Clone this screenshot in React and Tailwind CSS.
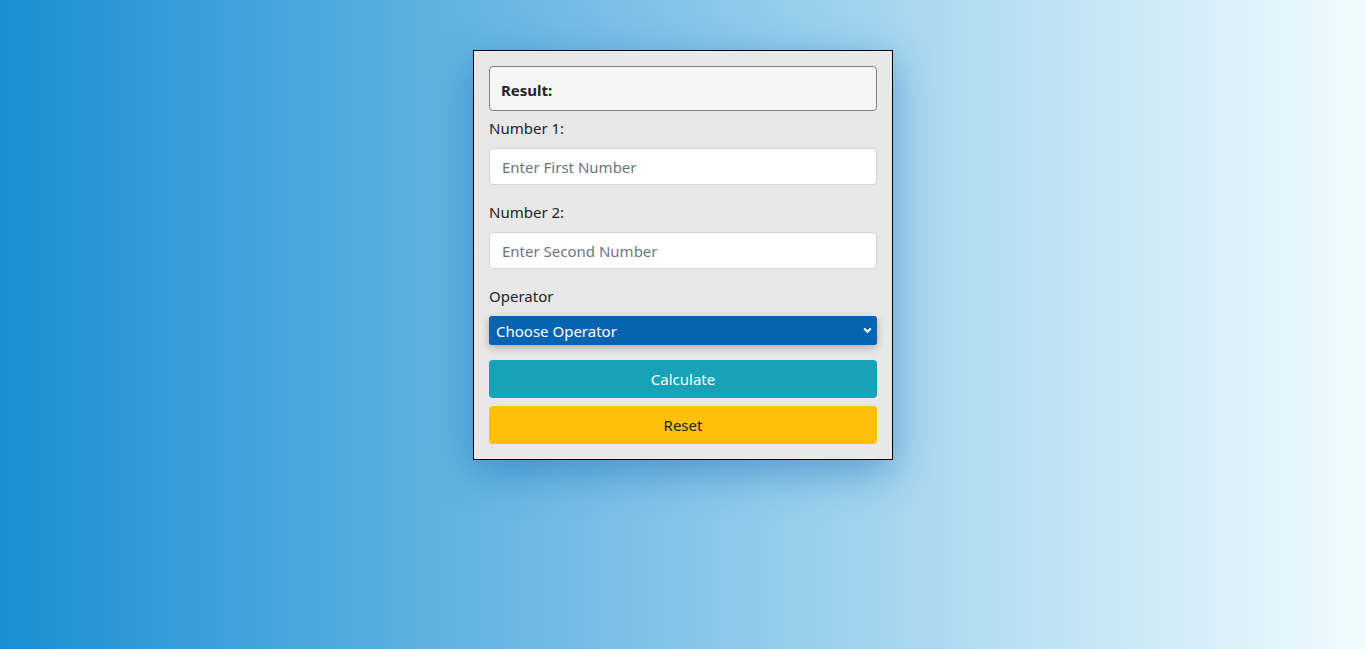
import { useState } from "react";

export default function App() {
  const [num1, setNum1] = useState("");
  const [num2, setNum2] = useState("");
  const [op, setOp] = useState("");
  const [result, setResult] = useState("");

  const calculate = () => {
    const a = parseFloat(num1);
    const b = parseFloat(num2);
    if (isNaN(a) || isNaN(b) || !op) return;
    if (op === "+") setResult(a + b);
    if (op === "-") setResult(a - b);
    if (op === "*") setResult(a * b);
    if (op === "/") setResult(b === 0 ? "Cannot divide by zero" : a / b);
  };

  const reset = () => {
    setNum1("");
    setNum2("");
    setOp("");
    setResult("");
  };

  return (
    <div className="min-h-screen bg-[linear-gradient(to_right,#1a8fd3,#f0fbfe)] pt-[50px] font-['Noto_Sans',sans-serif] text-[#212529]">
      <div className="mx-auto w-[420px] border border-black bg-[#e8e8e8] p-[15px] shadow-[0_12px_40px_rgba(0,90,170,0.45)]">
        <div className="flex h-[45px] items-center rounded border border-[#808080] bg-[#f5f5f5] px-[11px] pt-[3px] text-[15px] font-bold">
          Result: {result}
        </div>

        <label className="mt-[5px] mb-[8px] block h-6 text-[15px] leading-6">Number 1:</label>
        <input
          value={num1}
          onChange={(e) => setNum1(e.target.value)}
          placeholder="Enter First Number"
          className="block h-[37px] w-full rounded border border-[#ced4da] bg-white px-3 text-[15px] outline-none placeholder:text-[#6c757d]"
        />

        <label className="mt-[15px] mb-2 block h-6 text-[15px] leading-6">Number 2:</label>
        <input
          value={num2}
          onChange={(e) => setNum2(e.target.value)}
          placeholder="Enter Second Number"
          className="block h-[37px] w-full rounded border border-[#ced4da] bg-white px-3 text-[15px] outline-none placeholder:text-[#6c757d]"
        />

        <label className="mt-[15px] mb-2 block h-6 text-[15px] leading-6">Operator</label>
        <div className="relative">
          <select
            value={op}
            onChange={(e) => setOp(e.target.value)}
            className="block h-[29px] w-full appearance-none rounded-[3px] bg-[#0563af] px-[7px] pt-[1px] text-[15px] text-white shadow-[0_3px_8px_rgba(0,0,0,0.25)] outline-none"
          >
            <option value="">Choose Operator</option>
            <option value="+">+</option>
            <option value="-">-</option>
            <option value="*">*</option>
            <option value="/">/</option>
          </select>
          <svg
            className="pointer-events-none absolute right-[5px] top-[11px]"
            width="9"
            height="7"
            viewBox="0 0 9 7"
          >
            <path d="M1.2 1.5 L4.5 4.8 L7.8 1.5" fill="none" stroke="white" strokeWidth="2" />
          </svg>
        </div>

        <button
          onClick={calculate}
          className="mt-[15px] block h-[38px] w-full rounded bg-[#17a2b8] text-[15px] text-white"
        >
          Calculate
        </button>
        <button
          onClick={reset}
          className="mt-2 block h-[38px] w-full rounded bg-[#ffc107] text-[15px] text-[#212529]"
        >
          Reset
        </button>
      </div>
    </div>
  );
}
